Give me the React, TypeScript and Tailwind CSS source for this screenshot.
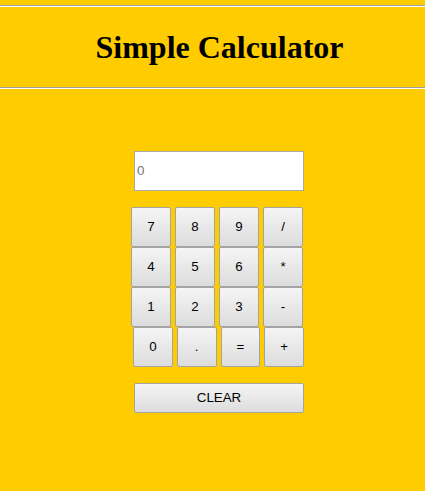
import React from "react";

const rows = [
  ["7", "8", "9", "/"],
  ["4", "5", "6", "*"],
  ["1", "2", "3", "-"],
];
const last = ["0", ".", "=", "+"];

function Key({ label }: { label: string }) {
  return (
    <button className="w-[40px] h-[40px] border border-[#a3a3a3] rounded-[2px] bg-gradient-to-b from-[#f5f5f5] to-[#dcdcdc] text-[13.33px] text-black font-['Liberation_Sans',Arial,sans-serif] flex items-center justify-center">
      {label}
    </button>
  );
}

export default function App() {
  return (
    <div className="w-full h-[491px] bg-[#ffcc00] pt-[5px] font-['Liberation_Sans',Arial,sans-serif]">
      <div className="h-0 border-t border-b border-t-[#a0a0a0] border-b-white" />
      <div className="h-[80px] flex items-center justify-center pl-[14px]">
        <h1 className="text-[32px] font-bold text-black font-['Liberation_Serif','Times_New_Roman',serif] leading-normal">
          Simple Calculator
        </h1>
      </div>
      <div className="h-0 border-t border-b border-t-[#a0a0a0] border-b-white" />
      <div className="ml-[134px] w-[170px] pt-[62px] flex flex-col">
        <div className="w-[170px] h-[40px] bg-white border border-[#a9a9a9] flex items-center pl-[2px] text-[13.33px] text-[#757575]">
          0
        </div>
        <div className="mt-[16px] flex flex-col -ml-[3px]">
          {rows.map((r, i) => (
            <div key={i} className="flex gap-[4px]">
              {r.map((k) => (
                <Key key={k} label={k} />
              ))}
            </div>
          ))}
          <div className="flex gap-[4px] ml-[2px]">
            {last.map((k) => (
              <Key key={k} label={k} />
            ))}
          </div>
        </div>
        <button className="mt-[16px] w-[170px] h-[30px] border border-[#a3a3a3] rounded-[2px] bg-gradient-to-b from-[#f5f5f5] to-[#dcdcdc] text-[13.33px] text-black flex items-center justify-center">
          CLEAR
        </button>
      </div>
    </div>
  );
}
